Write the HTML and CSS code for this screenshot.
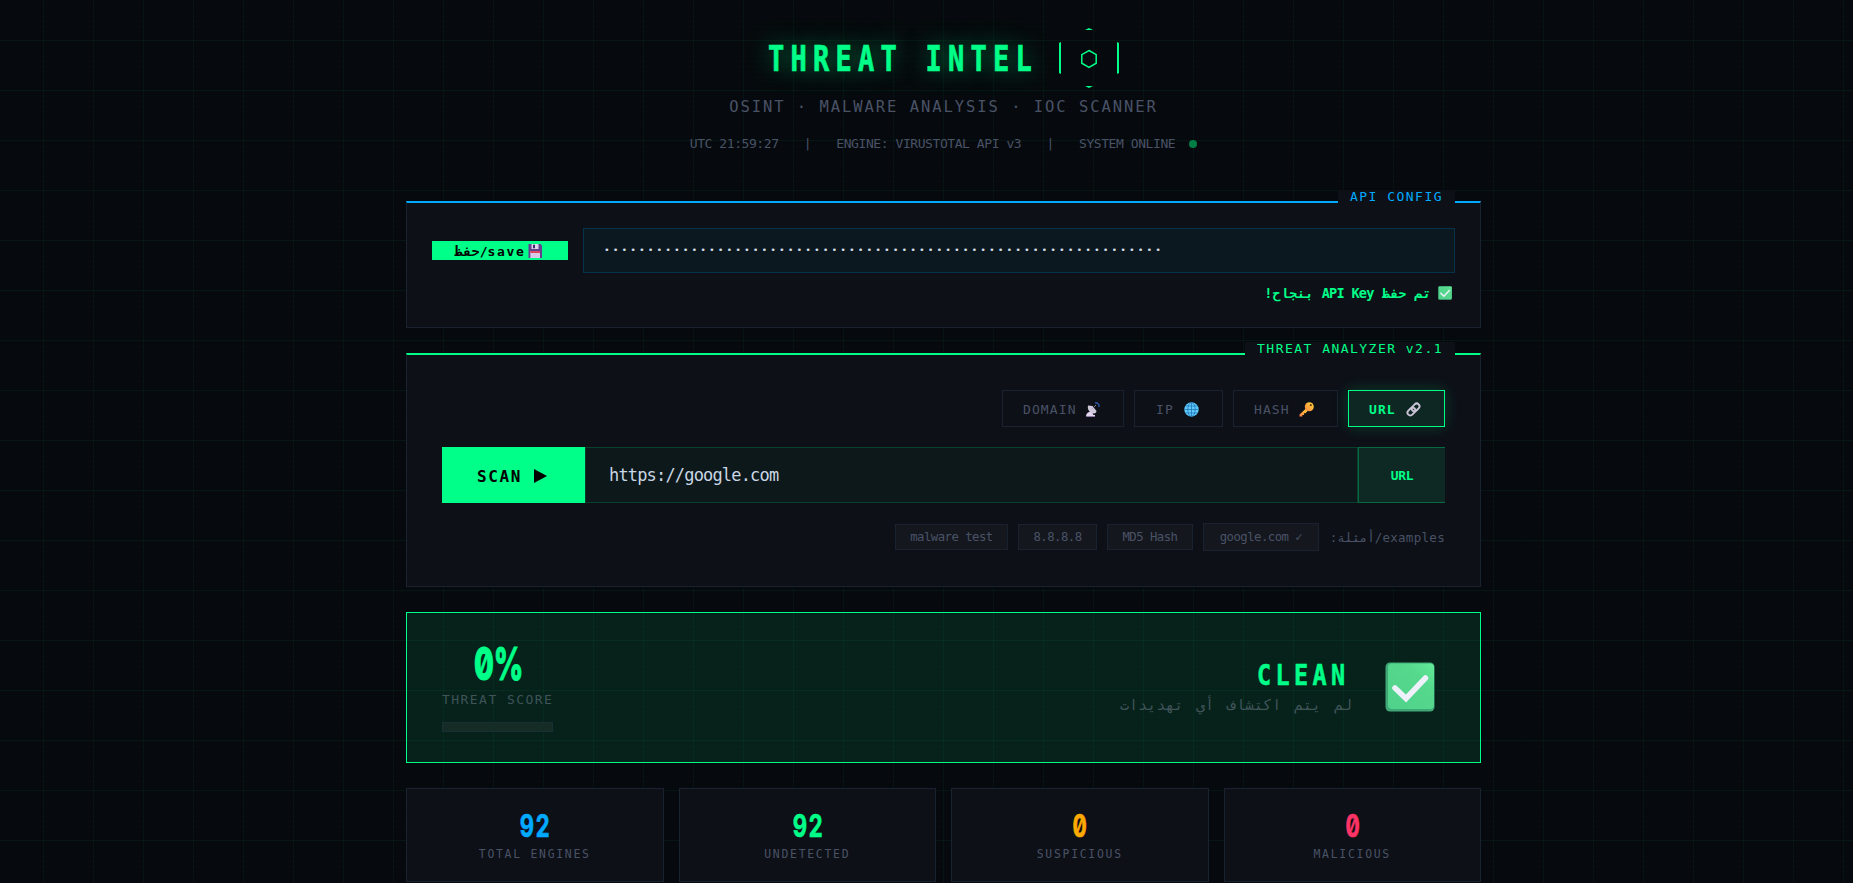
FILE: index.html
```
<!DOCTYPE html>
<html lang="ar">
<head>
    <meta charset="UTF-8">
    <title>Threat Intel</title>
    <link rel="stylesheet" href="styles.css">
</head>
<body>
    <!-- shared emoji-like icons -->
    <svg width="0" height="0" class="defs">
        <defs>
            <linearGradient id="keyFill" x1="0" y1="1" x2="1" y2="0">
                <stop offset="0" stop-color="#ff7d4a"/>
                <stop offset=".5" stop-color="#ffb03c"/>
                <stop offset="1" stop-color="#ffd93c"/>
            </linearGradient>
            <linearGradient id="checkFill" x1="0" y1="1" x2="1" y2="0">
                <stop offset="0" stop-color="#4fd18b"/>
                <stop offset=".7" stop-color="#56d98d"/>
                <stop offset="1" stop-color="#62ea99"/>
            </linearGradient>
            <symbol id="check" viewBox="0 0 50 50">
                <rect x=".5" y=".5" width="49" height="49" rx="4.5" fill="#3fa876"/>
                <rect x="3" y="1.5" width="46" height="45.5" rx="4" fill="url(#checkFill)"/>
                <path d="M10 26l11 10.5L40.500 16" fill="none" stroke="#eef0fa" stroke-width="5.500" stroke-linecap="round" stroke-linejoin="miter"/>
            </symbol>
        </defs>
    </svg>

    <div class="container">
        <header class="header">
            <div class="logo">
                <h1 class="title"><span>THREAT INTEL</span></h1>
                <div class="hexagon">
                    <svg width="18" height="20" viewBox="0 0 18 20"><path d="M9 1.500l7.200 4.200v8.500L9 18.500l-7.200-4.300V5.700z" fill="none" stroke="#00ff88" stroke-width="1.500"/></svg>
                </div>
            </div>
            <p class="subtitle">OSINT · MALWARE ANALYSIS · IOC SCANNER</p>
            <div class="status">
                <span>UTC 21:59:27</span>
                <span>|</span>
                <span>ENGINE: VIRUSTOTAL API v3</span>
                <span>|</span>
                <span>SYSTEM ONLINE<i class="dot"></i></span>
            </div>
        </header>

        <section class="panel panel-api">
            <div class="panel-tag">API CONFIG</div>
            <div class="api-row">
                <button class="save-btn">
                    <span>حفظ<span class="latin">/save</span></span>
                    <svg width="14" height="14" viewBox="0 0 14 14"><path d="M.5 0H12.500L14 1.500V14H.5z" fill="#63418f"/><path d="M3.500 0h7v5h-7z" fill="#dcd3ea"/><path d="M5 .8h2v3.400H5z" fill="#3e2a68"/><path d="M2.300 7h9.700v7H2.300z" fill="#d9c8e8"/><path d="M2.300 7h9.700v2H2.300z" fill="#e0485f"/></svg>
                </button>
                <input class="api-input" type="password" value="0123456789abcdef0123456789abcdef0123456789abcdef0123456789abcdef">
            </div>
            <div class="api-msg" dir="rtl">
                <svg width="14" height="14"><use href="#check"/></svg>
                <span>تم حفظ <b>API Key</b> بنجاح!</span>
            </div>
        </section>

        <section class="panel panel-scan">
            <div class="panel-tag">THREAT ANALYZER v2.1</div>
            <div class="tabs">
                <button class="tab tab-domain">DOMAIN
                    <svg width="14" height="15" viewBox="0 0 14 15"><path d="M0 14.500c0-2 1-4 3-4.500h3l1.500 3h1.500v1.500z" fill="#e3d5f0"/><path d="M1 14h8v1H1z" fill="#8d78a8"/><path d="M2 3.500C1 7 3.500 11.500 8 11.500c1.500 0 2.500-1 2.500-2.500L6.500 4z" fill="#cfc8da"/><path d="M6.500 6.500l3.500-3.500" stroke="#8a8098" stroke-width="1"/><path d="M9 1c2.700-.5 4.300 1.300 4 4" fill="none" stroke="#28509c" stroke-width="1.600"/></svg>
                </button>
                <button class="tab tab-ip">IP
                    <svg width="15" height="15" viewBox="0 0 15 15"><circle cx="7.500" cy="7.500" r="7.200" fill="#5fcbff"/><g fill="none" stroke="#1b6cab" stroke-width=".7"><path d="M7.500.5v14M.5 7.500h14M1.700 4h11.600M1.700 11h11.600"/><ellipse cx="7.500" cy="7.500" rx="3.700" ry="7"/></g></svg>
                </button>
                <button class="tab tab-hash">HASH
                    <svg width="15" height="15" viewBox="0 0 15 15"><path d="M7.500 6L.5 12.500v2h2.800v-1.600H5v-1.700h1.500L9 8.500z" fill="url(#keyFill)"/><circle cx="10.300" cy="4.700" r="4.500" fill="url(#keyFill)"/><circle cx="11.800" cy="3.200" r="1.100" fill="#69430f"/></svg>
                </button>
                <button class="tab tab-url active">URL
                    <svg width="15" height="15" viewBox="0 0 15 15"><g fill="none" stroke="#cbc3d6" stroke-width="1.900"><rect x="5.200" y="2.600" width="8.700" height="5.600" rx="2.800" transform="rotate(-45 9.600 5.400)"/><rect x="1.100" y="6.800" width="8.700" height="5.600" rx="2.800" transform="rotate(-45 5.400 9.600)"/></g></svg>
                </button>
            </div>

            <div class="search">
                <button class="scan-btn"><span>SCAN</span><svg width="13" height="14" viewBox="0 0 13 14"><path d="M0 0l13 7-13 7z"/></svg></button>
                <input class="search-input" type="text" value="https://google.com">
                <div class="type-badge">URL</div>
            </div>

            <div class="examples">
                <button class="chip chip-malware">malware test</button>
                <button class="chip chip-ip">8.8.8.8</button>
                <button class="chip chip-md5">MD5 Hash</button>
                <button class="chip chip-google">google.com ✓</button>
                <span class="examples-label">:أمثلة/examples</span>
            </div>
        </section>

        <section class="verdict">
            <div class="score">
                <div class="score-num"><span>0%</span></div>
                <div class="score-label">THREAT SCORE</div>
                <div class="score-bar"></div>
            </div>
            <div class="verdict-info">
                <div class="verdict-text">
                    <div class="verdict-title">CLEAN</div>
                    <div class="verdict-sub" dir="rtl">لم يتم اكتشاف أي تهديدات</div>
                </div>
                <svg class="verdict-icon" width="50" height="50"><use href="#check"/></svg>
            </div>
        </section>

        <section class="stats">
            <div class="stat blue"><div class="num">92</div><div class="label">TOTAL ENGINES</div></div>
            <div class="stat green"><div class="num">92</div><div class="label">UNDETECTED</div></div>
            <div class="stat orange"><div class="num">0</div><div class="label">SUSPICIOUS</div></div>
            <div class="stat red"><div class="num">0</div><div class="label">MALICIOUS</div></div>
        </section>
    </div>
</body>
</html>
```
FILE: styles.css
```
:root {
    --green: #00ff88;
    --blue: #00aaff;
    --muted: #4a5266;
    --panel: #0d1017;
    --border: #1a2230;
}

* {
    margin: 0;
    padding: 0;
    box-sizing: border-box;
}

body {
    height: 883px;
    overflow: hidden;
    color: #c8d6e5;
    font-family: "DejaVu Sans Mono", monospace;
    background-color: #060a0e;
    background-image:
        repeating-linear-gradient(transparent 0 3px, rgba(0, 0, 0, .1) 3px 5px),
        linear-gradient(rgba(0, 255, 136, .05) 1px, transparent 1px),
        linear-gradient(90deg, rgba(0, 255, 136, .04) 1px, transparent 1px);
    background-size: auto, 50px 50px, 50px 50px;
    background-position: 0 0, 0 40px, 43px 0;
}

button, input {
    font-family: inherit;
    border-radius: 0;
    outline: none;
    white-space: nowrap;
}

.defs {
    position: absolute;
}

.container {
    width: 1075px;
    margin-left: 406px;
}

/* header */
.header {
    height: 201px;
    padding-top: 28px;
    color: var(--muted);
    white-space: nowrap;
}

.logo {
    display: flex;
    justify-content: center;
    align-items: center;
    gap: 16px;
    height: 60px;
}

.title {
    width: 275px;
    font-size: 35.6px;
    line-height: 59px;
    letter-spacing: 8.2px;
    color: var(--green);
    -webkit-text-stroke: .7px var(--green);
    text-shadow: 0 0 26px rgba(0, 255, 136, .5);
}

.title span {
    display: block;
    transform: scaleX(.76);
    transform-origin: left;
}

.hexagon {
    display: flex;
    justify-content: center;
    align-items: center;
    width: 60px;
    height: 60px;
    padding-top: 2px;
    border: 2px solid var(--green);
    clip-path: polygon(50% 0, 100% 25%, 100% 75%, 50% 100%, 0 75%, 0 25%);
}

.subtitle {
    margin-top: 9px;
    font-size: 15.5px;
    line-height: 20px;
    letter-spacing: 1.95px;
    text-align: center;
}

.status {
    display: flex;
    justify-content: center;
    gap: 25.2px;
    margin-top: 17px;
    font-size: 13px;
    line-height: 20px;
    letter-spacing: -.43px;
}

.dot {
    display: inline-block;
    width: 8px;
    height: 8px;
    margin-left: 14px;
    border-radius: 50%;
    background: #007f45;
}

/* panels */
.panel {
    position: relative;
    background: var(--panel);
    border: 1px solid var(--border);
    border-top: 2px solid var(--green);
}

.panel-tag {
    position: absolute;
    top: -13px;
    right: 25px;
    height: 16px;
    padding: 0 12px;
    background: var(--panel);
    color: var(--green);
    font-size: 13px;
    line-height: 13px;
    letter-spacing: 1.47px;
}

.panel-api {
    height: 127px;
    padding: 25px 25px 0;
    border-top-color: var(--blue);
}

.panel-api .panel-tag {
    color: var(--blue);
}

.api-row {
    display: flex;
    align-items: center;
    gap: 15px;
    height: 45px;
}

.save-btn {
    display: flex;
    justify-content: center;
    align-items: center;
    gap: 2px;
    width: 136px;
    height: 19px;
    padding-right: 4px;
    border: none;
    background: var(--green);
    color: #000;
    font-size: 14px;
    font-weight: bold;
}

.latin {
    font-size: 13px;
    letter-spacing: 1.7px;
}

.api-input {
    flex: 1;
    height: 45px;
    padding: 0 20px 2px;
    border: 1px solid #06324c;
    background: #0c1820;
    color: #d0dae2;
    font-size: 9.5px;
    letter-spacing: 3.03px;
}

.api-msg {
    display: flex;
    align-items: center;
    gap: 7px;
    height: 20px;
    margin-top: 10px;
    padding-right: 3px;
    color: var(--green);
    font-size: 13.6px;
    font-weight: bold;
}

.api-msg b {
    letter-spacing: -.75px;
}

.panel-scan {
    height: 234px;
    margin-top: 25px;
    padding: 35px 35px 0;
}

.tabs {
    display: flex;
    justify-content: flex-end;
    gap: 10px;
    height: 37px;
}

.tab {
    display: flex;
    align-items: center;
    justify-content: space-between;
    padding: 1px 23px 0 20px;
    border: 1px solid var(--border);
    background: transparent;
    color: var(--muted);
    font-size: 13px;
    letter-spacing: 1.1px;
}

.tab-domain { width: 122px; }
.tab-ip { width: 89px; padding-left: 21px; }
.tab-hash { width: 105px; }
.tab-url { width: 97px; }

.tab.active {
    border-color: var(--green);
    background: #0e2723;
    color: var(--green);
    font-weight: bold;
    box-shadow: 0 0 15px rgba(0, 255, 136, .2);
}

.search {
    display: flex;
    height: 56px;
    margin-top: 20px;
}

.scan-btn {
    display: flex;
    align-items: center;
    gap: 12px;
    width: 143px;
    padding: 2px 0 0 35px;
    border: none;
    background: var(--green);
    color: #000;
    font-size: 16px;
    font-weight: bold;
    letter-spacing: 1.6px;
}

.search-input {
    flex: 1;
    padding: 0 23px;
    border: 1px solid #09402d;
    background: #0d181a;
    color: #c8d6e5;
    font-size: 17px;
    letter-spacing: -.83px;
}

.type-badge {
    width: 87px;
    border: 1px solid #066b42;
    border-right: none;
    background: #0e2824;
    color: var(--green);
    font-size: 13px;
    font-weight: bold;
    line-height: 56px;
    letter-spacing: -.3px;
    text-align: center;
}

.examples {
    display: flex;
    justify-content: flex-end;
    align-items: center;
    gap: 10px;
    height: 28px;
    margin-top: 20px;
    color: var(--muted);
    font-size: 12.5px;
}

.chip {
    height: 26px;
    border: 1px solid var(--border);
    background: #14171e;
    color: var(--muted);
    font-size: 12.3px;
    letter-spacing: -.53px;
}

.chip-malware { width: 113px; }
.chip-ip { width: 79px; }
.chip-md5 { width: 86px; }
.chip-google { width: 116px; height: 28px; }

.examples-label {
    width: 116px;
    letter-spacing: .3px;
    text-align: right;
    white-space: nowrap;
}

/* verdict */
.verdict {
    display: flex;
    justify-content: space-between;
    align-items: center;
    height: 151px;
    margin-top: 25px;
    padding: 0 45px 0 35px;
    border: 1px solid var(--green);
    background: rgba(6, 255, 146, .1);
}

.score {
    width: 111px;
    white-space: nowrap;
}

.score-num {
    display: flex;
    justify-content: center;
    height: 40px;
    padding-left: 3px;
    color: var(--green);
    font-family: Inter, sans-serif;
    font-size: 45px;
    font-weight: 800;
    line-height: 40px;
    font-feature-settings: "zero";
    -webkit-text-stroke: 1px var(--green);
}

.score-num span {
    transform: scaleX(.64);
}

.score-label {
    margin-top: 6px;
    color: #3f5358;
    font-size: 13px;
    line-height: 20px;
    letter-spacing: 1.45px;
}

.score-bar {
    height: 10px;
    margin-top: 12px;
    border: 1px solid #1a2f34;
    background: #142b26;
}

.verdict-info {
    display: flex;
    align-items: center;
    gap: 33px;
}

.verdict-title {
    height: 36px;
    padding-right: 3px;
    color: var(--green);
    font-size: 29px;
    font-weight: bold;
    line-height: 34px;
    letter-spacing: 5.4px;
    text-align: right;
    transform: scaleX(.81);
    transform-origin: right;
    -webkit-text-stroke: .5px var(--green);
}

.verdict-sub {
    color: #3f5358;
    font-size: 15px;
    line-height: 23px;
    word-spacing: 3.8px;
}

.verdict-icon {
    margin-top: -2px;
}

/* stats */
.stats {
    display: grid;
    grid-template-columns: repeat(4, 1fr);
    gap: 15px;
    margin-top: 25px;
}

.stat {
    height: 94px;
    padding-top: 17px;
    border: 1px solid var(--border);
    background: var(--panel);
    text-align: center;
}

.num {
    padding-left: 2px;
    font-family: Inter, sans-serif;
    font-size: 31.2px;
    font-weight: 700;
    line-height: 40px;
    letter-spacing: 2px;
    font-feature-settings: "zero", "tnum";
    transform: scaleX(.71);
    -webkit-text-stroke: .7px currentColor;
}

.label {
    color: var(--muted);
    font-size: 11.4px;
    line-height: 16px;
    letter-spacing: 1.75px;
}

.blue .num { color: var(--blue); }
.green .num { color: var(--green); }
.orange .num { color: #ffaa00; }
.red .num { color: #ff3366; }
```
